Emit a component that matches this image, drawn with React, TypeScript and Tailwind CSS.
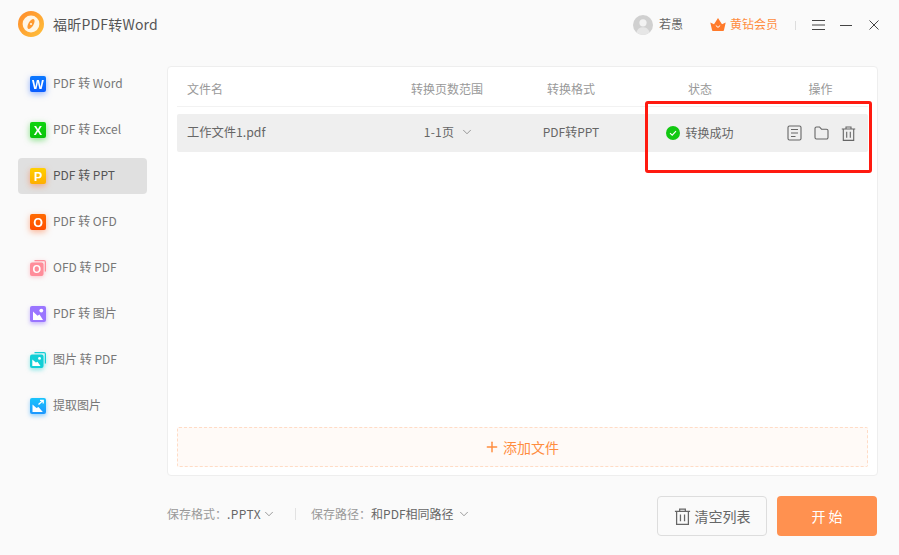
import { ChevronDown, Plus } from 'lucide-react';

const FONT = "font-['Noto_Sans_CJK_SC','Noto_Sans',sans-serif]";

function Tile({ from, to, glow, letter }: { from: string; to: string; glow: string; letter: string }) {
  return (
    <svg width="16" height="16" viewBox="0 0 16 16" style={{ filter: `drop-shadow(0 2px 3px ${glow})` }}>
      <defs>
        <linearGradient id={`t${letter}${from}`} x1="0" y1="0" x2="0" y2="1">
          <stop offset="0" stopColor={from} />
          <stop offset="1" stopColor={to} />
        </linearGradient>
      </defs>
      <rect width="16" height="16" rx="2" fill={`url(#t${letter}${from})`} />
      <text x="8" y="12.6" textAnchor="middle" fontSize="12.5" fontWeight="700" fill="#fff" fontFamily="Liberation Sans, sans-serif">
        {letter}
      </text>
    </svg>
  );
}

function OfdIcon() {
  return (
    <svg width="16" height="16" viewBox="0 0 16 16" style={{ filter: 'drop-shadow(0 1px 2px #ff8d9a80)' }}>
      <path d="M4.5 0.6H14a1.4 1.4 0 0 1 1.4 1.4V11.5" fill="none" stroke="#ff8d9a" strokeWidth="1.2" />
      <rect x="0" y="2.5" width="13.5" height="13.5" rx="2" fill="#ff8d9a" />
      <text x="6.7" y="13.4" textAnchor="middle" fontSize="11" fontWeight="700" fill="#fff" fontFamily="Liberation Sans, sans-serif">
        O
      </text>
    </svg>
  );
}

function PicIcon() {
  return (
    <svg width="16" height="16" viewBox="0 0 16 16" style={{ filter: 'drop-shadow(0 2px 2px #8f6cff80)' }}>
      <rect width="16" height="16" rx="2" fill="#9a75ff" />
      <circle cx="11.3" cy="4.6" r="1.9" fill="#fff" />
      <path d="M3 14V5.5l4.5 4.2 2-1.2 3.5 5.5z" fill="#fff" />
    </svg>
  );
}

function PicPdfIcon() {
  return (
    <svg width="16" height="16" viewBox="0 0 16 16" style={{ filter: 'drop-shadow(0 2px 2px #1dd4d480)' }}>
      <path d="M4.5 0.6H14a1.4 1.4 0 0 1 1.4 1.4V11.5" fill="none" stroke="#12cfd6" strokeWidth="1.2" />
      <rect x="0" y="2.5" width="13.5" height="13.5" rx="2" fill="#12cfd6" />
      <circle cx="9.5" cy="6.4" r="1.4" fill="#fff" />
      <path d="M2.3 14V7.4l3.6 3.2 1.6-.9 3 4.3z" fill="#fff" />
    </svg>
  );
}

function ExtractIcon() {
  return (
    <svg width="16" height="16" viewBox="0 0 16 16" style={{ filter: 'drop-shadow(0 2px 2px #2aa6ff80)' }}>
      <defs>
        <linearGradient id="ex" x1="0" y1="0" x2="0" y2="1">
          <stop offset="0" stopColor="#19c4fb" />
          <stop offset="1" stopColor="#1d97ff" />
        </linearGradient>
      </defs>
      <rect width="16" height="16" rx="2" fill="url(#ex)" />
      <path d="M2.5 14V6.5l4 3.6 2-1.2 4.3 5.1z" fill="#fff" />
      <path d="M8.5 6.5 13 2.5M10 2.4h3.2v3.2" fill="none" stroke="#fff" strokeWidth="1.3" />
    </svg>
  );
}

const navItems = [
  { label: 'PDF 转 Word', icon: <Tile from="#0a78ff" to="#0a5cff" glow="#2b6cff80" letter="W" /> },
  { label: 'PDF 转 Excel', icon: <Tile from="#0fd40f" to="#0ac40a" glow="#14c81480" letter="X" /> },
  { label: 'PDF 转 PPT', icon: <Tile from="#ffd000" to="#ffae00" glow="#ff7a3c90" letter="P" />, active: true },
  { label: 'PDF 转 OFD', icon: <Tile from="#ff6a00" to="#ff4d00" glow="#ff6a2a80" letter="O" /> },
  { label: 'OFD 转 PDF', icon: <OfdIcon /> },
  { label: 'PDF 转 图片', icon: <PicIcon /> },
  { label: '图片 转 PDF', icon: <PicPdfIcon /> },
  { label: '提取图片', icon: <ExtractIcon /> },
];

function Logo() {
  return (
    <svg width="26" height="26" viewBox="0 0 26 26">
      <defs>
        <linearGradient id="lg" x1="0" y1="0" x2="1" y2="1">
          <stop offset="0" stopColor="#ff8a2a" />
          <stop offset="1" stopColor="#ffc23c" />
        </linearGradient>
      </defs>
      <circle cx="13" cy="13" r="13" fill="url(#lg)" />
      <circle cx="13" cy="13" r="8.4" fill="#fff6e6" />
      <ellipse cx="13" cy="13" rx="2.6" ry="5.6" transform="rotate(30 13 13)" fill="#ff9a30" />
      <circle cx="13" cy="13" r="1.1" fill="#fff6e6" />
    </svg>
  );
}

function DocIcon() {
  return (
    <svg width="15" height="16" viewBox="0 0 15 16" fill="none" stroke="#666" strokeWidth="1.1">
      <rect x="1" y="1" width="13" height="14" rx="1.5" />
      <path d="M4 4.5h7M4 8h7M4 11.5h4.5" />
    </svg>
  );
}

function FolderIcon() {
  return (
    <svg width="15" height="14" viewBox="0 0 15 14" fill="none" stroke="#666" strokeWidth="1.1">
      <path d="M1 2.5A1.5 1.5 0 0 1 2.5 1h3l2 2.2h5A1.5 1.5 0 0 1 14 4.7v6.8a1.5 1.5 0 0 1-1.5 1.5h-10A1.5 1.5 0 0 1 1 11.5z" />
    </svg>
  );
}

function TrashIcon({ size = 15 }: { size?: number }) {
  return (
    <svg width={size} height={size} viewBox="0 0 15 15" fill="none" stroke="#666" strokeWidth="1.1">
      <path d="M0.8 3h13.4M5 3V1h5v2M2.3 3v11.4h10.4V3M5.7 5.8v6M9.3 5.8v6" />
    </svg>
  );
}

function Crown() {
  return (
    <svg width="16" height="13" viewBox="0 0 16 13">
      <path d="M0.3 4.5 4 6.3 8 0l4 6.3 3.7-1.8L14 12a1 1 0 0 1-1 1H3a1 1 0 0 1-1-1z" fill="#ff7a2a" />
      <path d="M5.8 7.5 8 9.4l2.2-1.9" fill="none" stroke="#fff" strokeWidth="1" />
    </svg>
  );
}

function Avatar() {
  return (
    <svg width="20" height="20" viewBox="0 0 20 20">
      <circle cx="10" cy="10" r="10" fill="#d0d0d0" />
      <circle cx="10" cy="7.8" r="3.6" fill="#f2f2f2" />
      <path d="M3.4 17.5c.8-3.6 3.5-5.3 6.6-5.3s5.8 1.7 6.6 5.3A10 10 0 0 1 10 20a10 10 0 0 1-6.6-2.5z" fill="#e6e6e6" />
    </svg>
  );
}

// window controls: bare strokes, lucide's glyphs carry too much padding here
function WindowControls() {
  return (
    <div className="ml-[16px] mt-[2px] flex items-center gap-[15px]">
      <svg width="13" height="10" viewBox="0 0 13 10" stroke="#444" strokeWidth="1">
        <path d="M0 0.5h13M0 5h13M0 9.5h13" />
      </svg>
      <svg width="12" height="10" viewBox="0 0 12 10" stroke="#444" strokeWidth="1">
        <path d="M0 5.5h12" />
      </svg>
      <svg className="ml-[2px]" width="10" height="10" viewBox="0 0 10 10" stroke="#444" strokeWidth="1">
        <path d="M0.5 0.5l9 9M9.5 0.5l-9 9" />
      </svg>
    </div>
  );
}

export default function App() {
  return (
    <div className={`relative flex h-[555px] w-[899px] flex-col overflow-hidden bg-[#fafafa] text-[#666] ${FONT}`}>
      <header className="flex h-[48px] shrink-0 items-center pl-[18px] pr-[20px]">
        <Logo />
        <span className="ml-[9px] text-[14px] tracking-[0.2px] text-[#555]">福昕PDF转Word</span>
        <div className="ml-auto flex items-center">
          <span className="mt-[2px]">
            <Avatar />
          </span>
          <span className="ml-[6px] text-[12px] text-[#666]">若愚</span>
          <span className="ml-[27px]">
            <Crown />
          </span>
          <span className="ml-[4px] text-[12px] text-[#ff8d3f]">黄钻会员</span>
          <span className="ml-[17px] mt-[2px] h-[9px] w-px bg-[#ddd]" />
          <WindowControls />
        </div>
      </header>

      <div className="mt-[18px] flex h-[410px] shrink-0 pl-[18px]">
        <nav className="flex w-[129px] shrink-0 flex-col gap-[10px]">
          {navItems.map((item) => (
            <div
              key={item.label}
              className={`flex h-[36px] items-center gap-[7px] rounded-[4px] pl-[12px] text-[12px] ${
                item.active ? 'bg-[#e0e0e0] text-[#555]' : 'text-[#777]'
              }`}
            >
              {item.icon}
              <span className="pb-[2px]">{item.label}</span>
            </div>
          ))}
        </nav>

        <main className="ml-[20px] flex w-[711px] flex-col rounded-[4px] border border-[#eee] bg-white px-[9px] pb-[8px]">
          <div className="grid h-[40px] shrink-0 grid-cols-[210px_120px_128px_130px_103px] items-center border-b border-[#f2f2f2] pt-[4px] text-[12px] text-[#999]">
            <span className="pl-[10px]">文件名</span>
            <span className="text-center">转换页数范围</span>
            <span className="text-center">转换格式</span>
            <span className="text-center">状态</span>
            <span className="pl-[8px] text-center">操作</span>
          </div>
          <div className="mt-[7px] grid h-[38px] shrink-0 grid-cols-[210px_120px_128px_130px_103px] items-center rounded-[2px] bg-[#efefef] text-[#666]">
            <span className="pb-[2px] pl-[10px] text-[12.25px]">工作文件1.pdf</span>
            <span className="flex items-center justify-center gap-[6px] pb-[2px] pl-[4px] text-[12px] tracking-[0.2px]">
              1-1页
              <ChevronDown className="h-[14px] w-[14px] text-[#666]" strokeWidth={1.1} />
            </span>
            <span className="pb-[2px] text-center text-[12px]">PDF转PPT</span>
            <span className="flex items-center justify-center gap-[5px] text-[12px]">
              <svg width="14" height="14" viewBox="0 0 14 14">
                <circle cx="7" cy="7" r="7" fill="#12c812" />
                <path d="M4 7.2 6.2 9.2 10 5.2" fill="none" stroke="#fff" strokeWidth="1.1" />
              </svg>
              转换成功
            </span>
            <span className="flex items-center justify-center gap-[12px] pl-[10px]">
              <DocIcon />
              <FolderIcon />
              <TrashIcon />
            </span>
          </div>
          <button className="mt-auto flex h-[40px] shrink-0 items-center justify-center gap-[3px] rounded-[2px] border border-dashed border-[#ffdcc6] bg-[#fffaf7] pr-[2px] text-[14px] text-[#ff8d3f]">
            <Plus className="h-[16px] w-[16px]" strokeWidth={2.2} />
            添加文件
          </button>
        </main>
      </div>

      <footer className="mt-[20px] flex h-[40px] shrink-0 items-center pl-[167px]">
        <div className="flex items-center pb-[4px] text-[12px]">
          <span className="text-[#999]">保存格式：</span>
          <span className="tracking-[0.4px] text-[#666]">.PPTX</span>
          <ChevronDown className="ml-[1px] h-[14px] w-[14px] text-[#666]" strokeWidth={1.1} />
          <span className="ml-[19px] h-[12px] w-px bg-[#e2e2e2]" />
          <span className="ml-[15px] text-[#999]">保存路径：</span>
          <span className="text-[#666]">和PDF相同路径</span>
          <ChevronDown className="ml-[3px] h-[14px] w-[14px] text-[#666]" strokeWidth={1.1} />
        </div>
        <button className="ml-auto flex h-[40px] w-[110px] items-center justify-center gap-[4px] rounded-[4px] border border-[#ddd] text-[14px] text-[#666]">
          <TrashIcon size={17} />
          清空列表
        </button>
        <button className="ml-[10px] mr-[22px] h-[40px] w-[100px] rounded-[4px] bg-[#ff9150] text-[14px] text-white">
          开 始
        </button>
      </footer>

      <div className="absolute left-[645px] top-[101px] h-[72px] w-[227px] rounded-[3px] border-[3px] border-[#ff1a10]" />
    </div>
  );
}
